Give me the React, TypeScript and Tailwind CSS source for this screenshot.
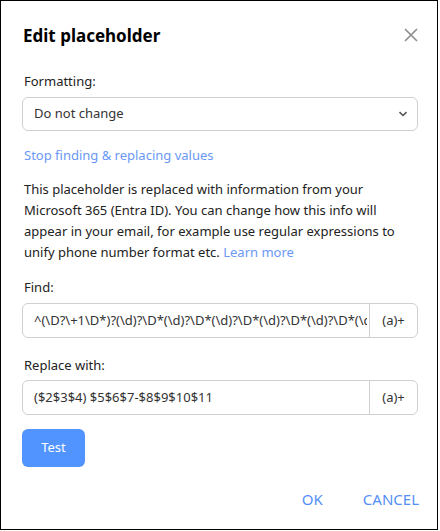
import React from "react";

export default function App() {
  const font = { fontFamily: '"Noto Sans", "Open Sans", sans-serif' };
  return (
    <div className="w-[440px] h-[531px] bg-white" style={font}>
      <div className="w-[438px] h-[530px] border border-black bg-white flex flex-col pl-[21px] pr-[19px] text-[13px] text-[#222]">
        <div className="flex items-center justify-between pt-[20px] h-[48px]">
          <h1 className="text-[17px] font-bold text-black leading-none pl-[1px]">Edit placeholder</h1>
          <svg width="14" height="14" viewBox="0 0 14 14" className="mr-[0px]">
            <path d="M1 1 L13 13 M13 1 L1 13" stroke="#8c8c8c" strokeWidth="1.6" />
          </svg>
        </div>
        <div className="mt-[22px] pl-[2px] leading-[20px]">Formatting:</div>
        <div className="mt-[6px] h-[34px] rounded-[6px] border border-[#d0d0d0] flex items-center justify-between pl-[11px] pr-[9px]">
          <span className="text-[#333]">Do not change</span>
          <svg width="10" height="6" viewBox="0 0 10 6">
            <path d="M1.5 1.2 L5 4.5 L8.5 1.2" stroke="#555" strokeWidth="1.6" fill="none" />
          </svg>
        </div>
        <div className="mt-[14px] pl-[2px] text-[#6a98f5] leading-[20px]">Stop finding &amp; replacing values</div>
        <p className="mt-[14px] pl-[2px] leading-[21px] text-[#222]">
          This placeholder is replaced with information from your Microsoft 365 (Entra ID). You can change how this info will appear in your email, for example use regular expressions to unify phone number format etc.{" "}
          <span className="text-[#6a98f5]">Learn more</span>
        </p>
        <div className="mt-[14px] pl-[2px] leading-[20px]">Find:</div>
        <div className="mt-[6px] h-[35px] rounded-[6px] border border-[#d0d0d0] flex items-stretch">
          <div className="flex-1 min-w-0 overflow-hidden whitespace-nowrap flex items-center pl-[11px] pr-[2px] text-[#333]">
            <span className="overflow-hidden">^(\D?\+1\D*)?(\d)?\D*(\d)?\D*(\d)?\D*(\d)?\D*(\d)?\D*(\d)?\D*(\d)?\D*(\d)?\D*(\d)?\D*(\d)?\D*$</span>
          </div>
          <div className="w-[48px] shrink-0 border-l border-[#d0d0d0] flex items-center justify-center text-[#333]">(a)+</div>
        </div>
        <div className="mt-[17px] pl-[2px] leading-[20px]">Replace with:</div>
        <div className="mt-[5px] h-[35px] rounded-[6px] border border-[#d0d0d0] flex items-stretch">
          <div className="flex-1 min-w-0 overflow-hidden whitespace-nowrap flex items-center pl-[11px] text-[#333]">
            ($2$3$4) $5$6$7-$8$9$10$11
          </div>
          <div className="w-[48px] shrink-0 border-l border-[#d0d0d0] flex items-center justify-center text-[#333]">(a)+</div>
        </div>
        <div className="mt-[14px]">
          <button className="w-[63px] h-[38px] rounded-[6px] bg-[#5194ff] text-white text-[13px]">Test</button>
        </div>
        <div className="mt-[21px] flex justify-end items-center gap-[40px] text-[#5590f5] text-[15px] mr-[-1px]">
          <span>OK</span>
          <span>CANCEL</span>
        </div>
      </div>
    </div>
  );
}
